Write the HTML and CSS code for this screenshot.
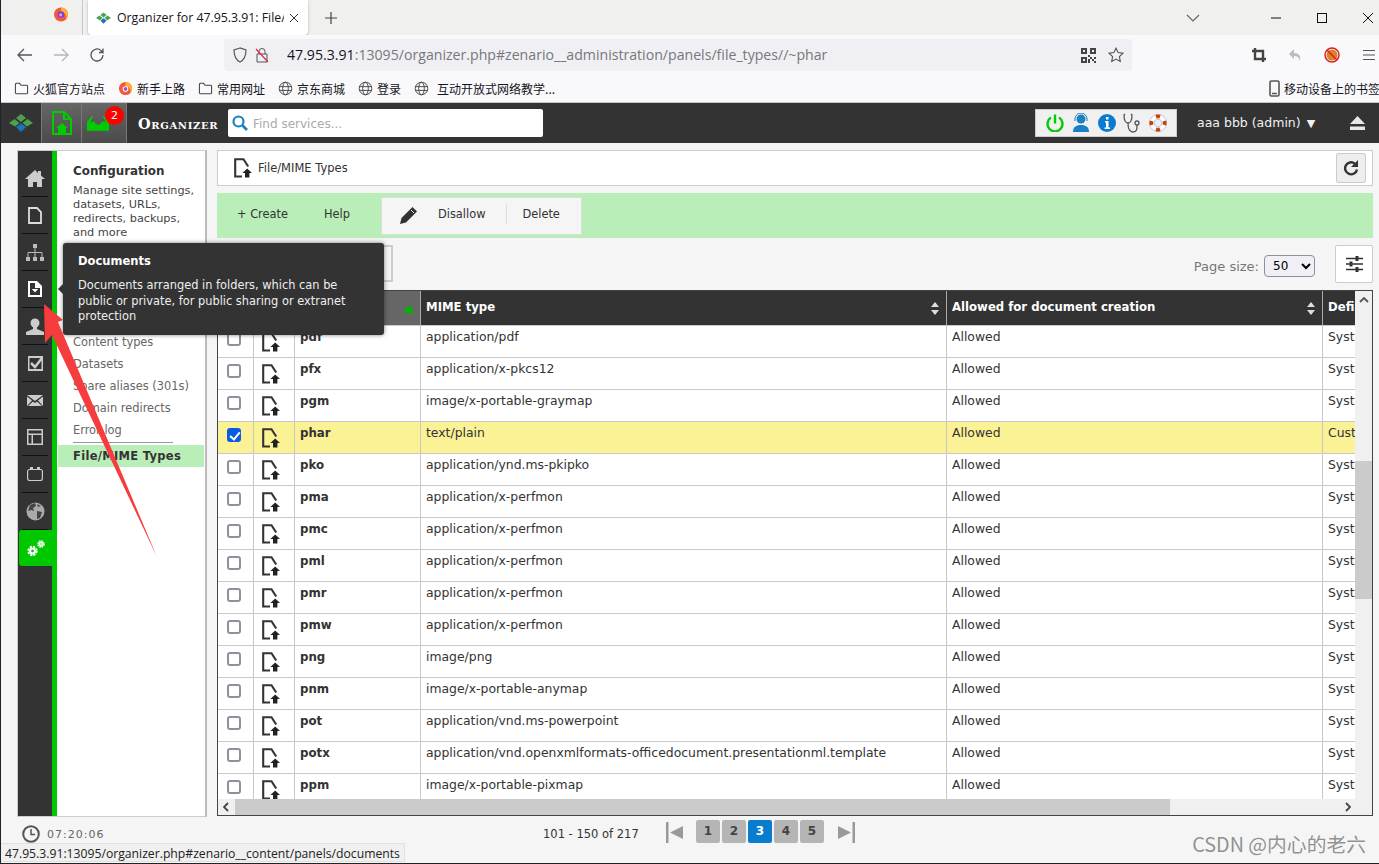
FILE: index.html
```html
<!DOCTYPE html>
<html lang="en">
<head>
<meta charset="utf-8">
<title>Organizer for 47.95.3.91: File/MIME Types</title>
<link rel="stylesheet" href="styles.css">
</head>
<body>
<svg class="defs" aria-hidden="true">
  <symbol id="fileup" viewBox="0 0 18 20"><path d="M8 18.500H1.200V1.200H9.500L14.200 8.500" fill="none" stroke="#333" stroke-width="2.100"/><path d="M13.200 10.500 18 15h-2.600v4.500H11V15H8.400z" fill="#222"/></symbol>
  <symbol id="folder" viewBox="0 0 16 16"><path d="M1.500 3.500a1 1 0 0 1 1-1h3.500l1.500 2h6a1 1 0 0 1 1 1v7a1 1 0 0 1-1 1h-11a1 1 0 0 1-1-1z" fill="none" stroke="#444" stroke-width="1.100"/></symbol>
  <symbol id="globe" viewBox="0 0 16 16"><g fill="none" stroke="#444" stroke-width="1"><circle cx="8" cy="8" r="6.700"/><ellipse cx="8" cy="8" rx="3" ry="6.700"/><path d="M1.500 6h13M1.500 10h13"/></g></symbol>
  <symbol id="zlogo" viewBox="0 0 24 18"><path d="M12 0l5 4-5 4-5-4z" fill="#4da04d"/><path d="M5.500 5 10.500 9 6 12.500 0 9z" fill="#4da04d"/><path d="M18.500 5 24 9 18 12.500 13.500 9z" fill="#4da04d"/><path d="M12 9.500 17 13l-5 5-5-5z" fill="#1a75bb"/></symbol>
</svg>

<header class="tabstrip">
  <div class="tab-pinned">
    <svg class="ff" viewBox="0 0 16 16" width="16" height="16"><circle cx="8" cy="8.500" r="7" fill="#f3593c"/><path d="M8 1.500a7 7 0 0 1 7 7c0 2-1 3.500-2 4.500 1-3-1-7-5-7z" fill="#ffb12b"/><circle cx="8" cy="8.500" r="3.300" fill="#7542e5"/><circle cx="7.700" cy="8.800" r="1.600" fill="#ff9aa2"/></svg>
  </div>
  <div class="tab">
    <svg width="15" height="12"><use href="#zlogo"/></svg>
    <span class="tab-title">Organizer for 47.95.3.91: File/</span>
    <svg class="tab-close" width="10" height="10" viewBox="0 0 10 10"><path d="M1 1l8 8M9 1l-8 8" stroke="#333" fill="none"/></svg>
  </div>
  <svg class="newtab" width="14" height="14" viewBox="0 0 14 14"><path d="M7 1v12M1 7h12" stroke="#444" stroke-width="1.200" fill="none"/></svg>
  <svg class="tabs-all" width="14" height="8" viewBox="0 0 14 8"><path d="M1 1l6 6 6-6" stroke="#666" stroke-width="1.200" fill="none"/></svg>
  <svg class="win" width="12" height="12" viewBox="0 0 12 12"><path d="M1 6h10" stroke="#111" fill="none"/></svg>
  <svg class="win" width="12" height="12" viewBox="0 0 12 12"><rect x="1.500" y="1.500" width="9" height="9" stroke="#111" fill="none"/></svg>
  <svg class="win" width="12" height="12" viewBox="0 0 12 12"><path d="M1 1l10 10M11 1 1 11" stroke="#111" fill="none"/></svg>
</header>

<nav class="navbar">
  <svg class="nav-ic" width="16" height="14" viewBox="0 0 16 14"><path d="M15 7H1.500M7 1 1 7l6 6" stroke="#555" stroke-width="1.300" fill="none"/></svg>
  <svg class="nav-ic" width="16" height="14" viewBox="0 0 16 14"><path d="M1 7h13.500M9 1l6 6-6 6" stroke="#b5b5b8" stroke-width="1.300" fill="none"/></svg>
  <svg class="nav-ic" width="16" height="16" viewBox="0 0 16 16"><path d="M14 8a6 6 0 1 1-2-4.500L14 5.500V1.500M14 5.500h-4" stroke="#555" stroke-width="1.300" fill="none"/></svg>
  <div class="urlbar">
    <svg width="14" height="16" viewBox="0 0 14 16"><path d="M7 1 1 3c0 6 2 10 6 12 4-2 6-6 6-12z" stroke="#555" stroke-width="1.200" fill="none"/></svg>
    <svg class="lock" width="14" height="16" viewBox="0 0 14 16"><path d="M4 7V4.500a3 3 0 0 1 6 0V7M2 7h10v8H2z" stroke="#555" fill="none"/><path d="M1 2l12 13" stroke="#e22850" stroke-width="1.300" fill="none"/></svg>
    <span class="url"><b>47.95.3.91</b>:13095/organizer.php#zenario__administration/panels/file_types//~phar</span>
    <svg class="qr" width="15" height="15" viewBox="0 0 15 15"><path d="M0 0h6v6H0zM9 0h6v6H9zM0 9h6v6H0zM2 2v2h2V2zM11 2v2h2V2zM2 11v2h2v-2zM7 7h2v2H7zM9 9h2v2H9zM11 11h2v2h-2zM13 9h2v2h-2zM7 11h2v4H7zM13 13h2v2h-2z" fill="#444" fill-rule="evenodd"/></svg>
    <svg class="star" width="16" height="16" viewBox="0 0 16 16"><path d="M8 1.200l2.100 4.400 4.800.6-3.500 3.400.9 4.800L8 12.100l-4.300 2.300.9-4.800L1.100 6.200l4.800-.6z" stroke="#555" stroke-width="1.100" fill="none"/></svg>
  </div>
  <div class="nav-tools">
    <svg width="14" height="14" viewBox="0 0 14 14"><path d="M3 0v11h11M0 3h11v11" stroke="#444" stroke-width="2.400" fill="none"/></svg>
    <svg width="14" height="14" viewBox="0 0 14 14"><path d="M6 1 1 6l5 5V8c3 0 5 1 6 5 1-5-1-8-6-8z" fill="#bbb"/></svg>
    <svg width="16" height="16" viewBox="0 0 16 16"><circle cx="8" cy="8" r="5.500" fill="#d9822b"/><circle cx="8" cy="8" r="7" stroke="#d22" stroke-width="1.500" fill="none"/><path d="M3 3l10 10" stroke="#d22" stroke-width="1.500"/></svg>
    <svg width="14" height="12" viewBox="0 0 14 12"><path d="M1 1.500h12M1 6h12M1 10.500h12" stroke="#555" stroke-width="1.200" fill="none"/></svg>
  </div>
</nav>

<div class="bookmarks">
  <span class="bm"><svg width="15" height="15"><use href="#folder"/></svg>火狐官方站点</span>
  <span class="bm"><svg width="15" height="15" viewBox="0 0 16 16"><circle cx="8" cy="8" r="7" fill="#f3593c"/><path d="M8 1a7 7 0 0 1 7 7c0 2-1 3-2 4 1-3-1-6-5-6z" fill="#ffb12b"/><circle cx="8" cy="8.500" r="3" fill="#fff"/><circle cx="8" cy="8.500" r="2" fill="#a14fd0"/></svg>新手上路</span>
  <span class="bm"><svg width="15" height="15"><use href="#folder"/></svg>常用网址</span>
  <span class="bm"><svg width="15" height="15"><use href="#globe"/></svg>京东商城</span>
  <span class="bm"><svg width="15" height="15"><use href="#globe"/></svg>登录</span>
  <span class="bm bm-wide"><svg width="15" height="15"><use href="#globe"/></svg>互动开放式网络教学...</span>
  <span class="bm bm-mobile"><svg width="11" height="17" viewBox="0 0 11 17"><rect x="1" y="1" width="9" height="15" rx="1.500" stroke="#555" stroke-width="1.600" fill="none"/><path d="M3 13.500h5" stroke="#555" stroke-width="1.500"/></svg>移动设备上的书签</span>
</div>

<section class="orgbar">
  <svg class="org-logo" width="24" height="18"><use href="#zlogo"/></svg>
  <a class="org-tab org-tab-home"><svg width="20" height="24" viewBox="0 0 20 24"><path d="M1 1h11l7 7v15H1zM12 1v7h7" stroke="#0c0" stroke-width="2" fill="none"/><path d="M10 12l6 5h-2v5H6v-5H4z" fill="#0c0"/></svg></a>
  <a class="org-tab org-tab-inbox"><svg width="22" height="16" viewBox="0 0 24 17"><path d="M0 17V7l5-6h2L3.500 7H8l2 3h4l2-3h4.500L17 1h2l5 6v10z" fill="#0c0"/></svg><span class="badge">2</span></a>
  <span class="org-name">Organizer</span>
  <label class="org-search">
    <svg width="16" height="16" viewBox="0 0 16 16"><circle cx="6.500" cy="6.500" r="5" stroke="#1b7fc4" stroke-width="2.200" fill="none"/><path d="M10.500 10.500 15 15" stroke="#1b7fc4" stroke-width="2.600"/></svg>
    <input type="text" placeholder="Find services...">
  </label>
  <div class="org-status">
    <svg width="18" height="18" viewBox="0 0 18 18"><path d="M5 3.500a7.500 7.500 0 1 0 8 0" stroke="#0c0" stroke-width="2.400" fill="none"/><path d="M9 0.500v9" stroke="#0c0" stroke-width="2.400"/></svg>
    <svg width="18" height="20" viewBox="0 0 18 20"><circle cx="9" cy="6" r="4.500" fill="#1b7fc4"/><path d="M3 8V6a6 6 0 0 1 12 0v2" stroke="#1b7fc4" fill="none"/><path d="M1 19c0-5 3-7 8-7s8 2 8 7z" fill="#1b7fc4"/></svg>
    <svg width="18" height="18" viewBox="0 0 18 18"><circle cx="9" cy="9" r="9" fill="#0a7cd0"/><path d="M7 7h3.500v6.500H12V15H6.500v-1.500H8V8.500H7zM8 3h2.500v2.500H8z" fill="#fff"/></svg>
    <svg width="18" height="20" viewBox="0 0 18 20"><path d="M2 1 1 2c0 5 1 8 4 8s4-3 4-8L8 1M5 10c0 5 1 9 5 9s4-3 4-7" stroke="#555" stroke-width="1.300" fill="none"/><circle cx="14" cy="10" r="2" stroke="#555" stroke-width="1.300" fill="none"/></svg>
    <svg width="18" height="18" viewBox="0 0 18 18"><circle cx="9" cy="9" r="8.500" fill="#fff" stroke="#bbc" stroke-width=".8"/><circle cx="9" cy="9" r="3.800" fill="#f0f0f0" stroke="#bbc" stroke-width=".8"/><path d="M7 2.600a7 7 0 0 1 4 0M7 15.400a7 7 0 0 0 4 0M2.600 7a7 7 0 0 0 0 4M15.400 7a7 7 0 0 1 0 4" stroke="#c8400f" stroke-width="3.800" fill="none"/></svg>
  </div>
  <span class="org-user">aaa bbb (admin)<i class="caret">▼</i></span>
  <svg class="org-eject" width="15" height="14" viewBox="0 0 15 14"><path d="M7.500 0 15 8H0z" fill="#e8e8e8"/><path d="M0 10.500h15V14H0z" fill="#e8e8e8"/></svg>
</section>

<main class="workspace">
  <aside class="sidebar">
    <ul class="rail">
      <li><svg width="20" height="18" viewBox="0 0 20 18"><path d="M10 1 0 10h3v8h5v-5h4v5h5v-8h3l-4-3.600V2h-3v2z" fill="#ccc"/></svg></li>
      <li><svg width="14" height="17" viewBox="0 0 14 17"><path d="M1 1h8l4 4v11H1z" stroke="#ddd" stroke-width="1.800" fill="none"/></svg></li>
      <li><svg width="18" height="17" viewBox="0 0 18 17"><path d="M7 0h4v4H7zM0 13h4v4H0zM7 13h4v4H7zM14 13h4v4h-4z" fill="#bbb"/><path d="M9 4v9M2 13V8.500h14V13" fill="none" stroke="#bbb"/></svg></li>
      <li><svg width="14" height="16" viewBox="0 0 14 16"><path d="M0 0h9l5 5v11H0z" fill="#fff"/><path d="M2 2v12h10V7H7V2z" fill="#333"/><path d="M3.800 8h6.400L7 11.500z" fill="#fff"/></svg></li>
      <li><svg width="18" height="17" viewBox="0 0 18 17"><circle cx="9" cy="5" r="4.500" fill="#ccc"/><path d="M7 9h4v2l7 3v3H0v-3l7-3z" fill="#ccc"/></svg></li>
      <li><svg width="15" height="15" viewBox="0 0 15 15"><path d="M0 0h15v15H0zM1.500 2v11h12V2z" fill="#ccc" fill-rule="evenodd"/><path d="M3 7l4 4 7-9" stroke="#ccc" stroke-width="2.500" fill="none"/></svg></li>
      <li><svg width="16" height="11" viewBox="0 0 16 11"><path d="M0 0h16L8 6zM0 1.500V11l5-5.500zM16 1.500V11l-5-5.500zM6 6.500 8 8l2-1.500 5 4.500H1z" fill="#ccc"/></svg></li>
      <li><svg width="16" height="16" viewBox="0 0 16 16"><path d="M0 0h16v16H0zM1.500 1.500v3h13v-3zM1.500 6v8.500h3V6zM6 6v8.500h8.500V6z" fill="#ccc" fill-rule="evenodd"/></svg></li>
      <li><svg width="16" height="14" viewBox="0 0 16 14"><rect x="0.600" y="2.500" width="14.800" height="11" rx="2" stroke="#ccc" stroke-width="1.200" fill="none"/><path d="M3 0h3v2.500H3zM10 0h3v2.500h-3z" fill="#ccc"/></svg></li>
      <li><svg width="19" height="19" viewBox="0 0 19 19"><circle cx="9.500" cy="9.500" r="9" fill="#aaa"/><path d="M4 3l5-2 1 3-3 2 1 3-3-1-3 1zM11 9l5 1-2 6-3 1zM11 2l4 2-3 1z" fill="#444"/></svg></li>
      <li class="rail-on"><svg width="18" height="17" viewBox="0 0 18 17"><g fill="none" stroke="#fff"><circle cx="5.500" cy="11" r="2.400" stroke-width="2"/><circle cx="5.500" cy="11" r="4.200" stroke-width="2" stroke-dasharray="2.200 1.100"/><circle cx="14" cy="4" r="1.500" stroke-width="1.500"/><circle cx="14" cy="4" r="3" stroke-width="1.600" stroke-dasharray="1.600 .75"/></g></svg></li>
    </ul>
    <div class="stripe"></div>
    <div class="panel">
      <h2>Configuration</h2>
      <p>Manage site settings, datasets, URLs, redirects, backups, and more</p>
      <ul class="panel-list">
        <li>Content types</li>
        <li>Datasets</li>
        <li>Spare aliases (301s)</li>
        <li>Domain redirects</li>
        <li class="last">Error log</li>
      </ul>
      <div class="panel-current">File/MIME Types</div>
    </div>
  </aside>

  <div class="content">
    <div class="crumbs">
      <svg width="18" height="20"><use href="#fileup"/></svg>
      <span>File/MIME Types</span>
      <button class="refresh"><svg width="16" height="16" viewBox="0 0 16 16"><path d="M14 9.500A6 6 0 1 1 11.800 3.600" stroke="#333" stroke-width="2.400" fill="none"/><path d="M15 0v7H8z" fill="#333"/></svg></button>
    </div>
    <div class="actions">
      <span class="act act-create">+ Create</span>
      <span class="act act-help">Help</span>
      <div class="act-group">
        <svg width="17" height="17" viewBox="0 0 17 17"><path d="M12.500 0 17 4.500 6 15.500 0 17l1.500-6z" fill="#333"/><path d="M11 3l3 3" stroke="#eee"/></svg>
        <span class="act act-dis">Disallow</span>
        <span class="act act-del">Delete</span>
      </div>
    </div>
    <div class="filters">
      <div class="search-stub"></div>
      <span class="ps-label">Page size:</span>
      <select class="ps"><option>50</option></select>
      <button class="cols"><svg width="17" height="16" viewBox="0 0 17 16"><path d="M0 2.500h17M0 8h17M0 13.500h17" stroke="#333" stroke-width="1.500"/><path d="M9.500 0h3v5h-3zM3.500 5.500h3v5h-3zM9.500 11h3v5h-3z" fill="#333"/></svg></button>
    </div>
    <div class="grid">
      <div class="grid-top">
        <div class="grid-clip">
          <table>
            <colgroup><col class="c1"><col class="c2"><col class="c3"><col class="c4"><col class="c5"><col class="c6"></colgroup>
            <thead>
              <tr><th></th><th></th><th class="sorted">Extension<i class="tri"></i></th><th>MIME type<i class="sort"></i></th><th>Allowed for document creation<i class="sort"></i></th><th>Definition</th></tr>
            </thead>
            <tbody>
              <tr><td><input type="checkbox"></td><td><svg width="18" height="20"><use href="#fileup"/></svg></td><td><b>pdf</b></td><td>application/pdf</td><td>Allowed</td><td>System</td></tr>
              <tr><td><input type="checkbox"></td><td><svg width="18" height="20"><use href="#fileup"/></svg></td><td><b>pfx</b></td><td>application/x-pkcs12</td><td>Allowed</td><td>System</td></tr>
              <tr><td><input type="checkbox"></td><td><svg width="18" height="20"><use href="#fileup"/></svg></td><td><b>pgm</b></td><td>image/x-portable-graymap</td><td>Allowed</td><td>System</td></tr>
              <tr class="sel"><td><input type="checkbox" checked></td><td><svg width="18" height="20"><use href="#fileup"/></svg></td><td><b>phar</b></td><td>text/plain</td><td>Allowed</td><td>Custom</td></tr>
              <tr><td><input type="checkbox"></td><td><svg width="18" height="20"><use href="#fileup"/></svg></td><td><b>pko</b></td><td>application/ynd.ms-pkipko</td><td>Allowed</td><td>System</td></tr>
              <tr><td><input type="checkbox"></td><td><svg width="18" height="20"><use href="#fileup"/></svg></td><td><b>pma</b></td><td>application/x-perfmon</td><td>Allowed</td><td>System</td></tr>
              <tr><td><input type="checkbox"></td><td><svg width="18" height="20"><use href="#fileup"/></svg></td><td><b>pmc</b></td><td>application/x-perfmon</td><td>Allowed</td><td>System</td></tr>
              <tr><td><input type="checkbox"></td><td><svg width="18" height="20"><use href="#fileup"/></svg></td><td><b>pml</b></td><td>application/x-perfmon</td><td>Allowed</td><td>System</td></tr>
              <tr><td><input type="checkbox"></td><td><svg width="18" height="20"><use href="#fileup"/></svg></td><td><b>pmr</b></td><td>application/x-perfmon</td><td>Allowed</td><td>System</td></tr>
              <tr><td><input type="checkbox"></td><td><svg width="18" height="20"><use href="#fileup"/></svg></td><td><b>pmw</b></td><td>application/x-perfmon</td><td>Allowed</td><td>System</td></tr>
              <tr><td><input type="checkbox"></td><td><svg width="18" height="20"><use href="#fileup"/></svg></td><td><b>png</b></td><td>image/png</td><td>Allowed</td><td>System</td></tr>
              <tr><td><input type="checkbox"></td><td><svg width="18" height="20"><use href="#fileup"/></svg></td><td><b>pnm</b></td><td>image/x-portable-anymap</td><td>Allowed</td><td>System</td></tr>
              <tr><td><input type="checkbox"></td><td><svg width="18" height="20"><use href="#fileup"/></svg></td><td><b>pot</b></td><td>application/vnd.ms-powerpoint</td><td>Allowed</td><td>System</td></tr>
              <tr><td><input type="checkbox"></td><td><svg width="18" height="20"><use href="#fileup"/></svg></td><td><b>potx</b></td><td>application/vnd.openxmlformats-officedocument.presentationml.template</td><td>Allowed</td><td>System</td></tr>
              <tr><td><input type="checkbox"></td><td><svg width="18" height="20"><use href="#fileup"/></svg></td><td><b>ppm</b></td><td>image/x-portable-pixmap</td><td>Allowed</td><td>System</td></tr>
            </tbody>
          </table>
        </div>
        <div class="vbar">
          <svg width="10" height="6" viewBox="0 0 10 6"><path d="M1 5l4-4 4 4" stroke="#555" stroke-width="1.800" fill="none"/></svg>
          <div class="vthumb"></div>
        </div>
      </div>
      <div class="hbar">
        <svg width="6" height="10" viewBox="0 0 6 10"><path d="M5 1 1 5l4 4" stroke="#444" stroke-width="1.800" fill="none"/></svg>
        <div class="hthumb"></div>
        <svg width="6" height="10" viewBox="0 0 6 10"><path d="M1 1l4 4-4 4" stroke="#444" stroke-width="1.800" fill="none"/></svg>
      </div>
    </div>
  </div>

  <div class="clock">
    <svg width="18" height="18" viewBox="0 0 18 18"><circle cx="9" cy="9" r="7.800" stroke="#555" stroke-width="2" fill="none"/><path d="M9 4v5.500h4" stroke="#555" stroke-width="1.500" fill="none"/></svg>
    <span>07:20:06</span>
  </div>
  <div class="pager">
    <span class="count">101 - 150 of 217</span>
    <svg class="pg-first" width="17" height="21" viewBox="0 0 17 21"><path d="M0 0h2.500v21H0zM17 4v13L4 10.500z" fill="#999"/></svg>
    <span class="pg">1</span><span class="pg">2</span><span class="pg pg-on">3</span><span class="pg">4</span><span class="pg">5</span>
    <svg class="pg-last" width="17" height="21" viewBox="0 0 17 21"><path d="M17 0h-2.500v21H17zM0 4v13l13-6.500z" fill="#999"/></svg>
  </div>
</main>

<div class="tooltip">
  <h3>Documents</h3>
  <p>Documents arranged in folders, which can be public or private, for public sharing or extranet protection</p>
</div>
<svg class="arrow" width="130" height="270" viewBox="0 0 130 270"><path d="M4 0 23 16 18 18 117 253 12 31 5 39z" fill="#f63c3c"/></svg>
<div class="status">47.95.3.91:13095/organizer.php#zenario__content/panels/documents</div>
<div class="mark">CSDN @内心的老六</div>
</body>
</html>
```
FILE: styles.css
```css
* { box-sizing: border-box; }
html, body { margin: 0; padding: 0; }
body {
  position: relative;
  width: 1379px;
  height: 864px;
  overflow: hidden;
  display: flex;
  flex-direction: column;
  background: #f5f5f5;
  font-family: "DejaVu Sans", Verdana, sans-serif;
  font-size: 12px;
  color: #333;
  border-left: 1px solid #1c2430;
  border-bottom: 1px solid #222;
}
.defs { position: absolute; width: 0; height: 0; }
ul { list-style: none; margin: 0; padding: 0; }
svg { display: block; flex: none; }

/* browser chrome */
.tabstrip { height: 35px; flex: none; display: flex; align-items: center; background: #f0f0ef; font-family: "Open Sans", "Noto Sans", sans-serif; }
.tab-pinned { width: 82px; height: 35px; padding: 6px 0 0 52px; border-right: 1px solid #c8c8c8; }
.tab { display: flex; align-items: center; width: 220px; height: 35px; margin-left: 5px; padding-left: 8px; background: #fff; border-radius: 0 0 4px 4px; box-shadow: 0 1px 3px rgba(0,0,0,.25); font-size: 12.300px; color: #15141a; }
.tab svg:first-child { margin-right: 6px; }
.tab-title { width: 167px; white-space: nowrap; overflow: hidden; }
.tab-close { margin-left: 5px; }
.newtab { margin-left: 16px; }
.tabs-all { margin-left: 848px; }
.win { margin-left: 34px; }
.tabs-all + .win { margin-left: 70px; }

.navbar { height: 37px; flex: none; display: flex; align-items: center; background: #f9f9fb; padding: 3px 0 0 16px; }
.nav-ic { margin-right: 20px; }
.nav-ic:nth-child(3) { margin-right: 119px; }
.urlbar { display: flex; align-items: center; width: 908px; height: 32px; padding: 0 8px 0 9px; background: #f0f0f4; border-radius: 4px; font-family: "Open Sans", "Noto Sans", sans-serif; }
.lock { margin-left: 8px; }
.url { margin: 0 0 2px 18px; width: 750px; font-size: 14.130px; color: #77777c; white-space: nowrap; }
.url b { font-weight: 400; color: #15141a; }
.qr { margin-left: 44px; }
.star { margin-left: 12px; }
.nav-tools { display: flex; align-items: center; }
.nav-tools svg { margin-left: 22px; }
.nav-tools svg:first-child { margin-left: 120px; }

.bookmarks { height: 31px; flex: none; display: flex; align-items: center; padding: 2px 0 0 13px; background: #f9f9fb; border-bottom: 1px solid #c6c6c8; font-family: "Noto Sans CJK SC", "Noto Sans", sans-serif; font-size: 12px; color: #15141a; white-space: nowrap; }
.bm { display: flex; align-items: center; gap: 4px; margin-right: 13px; }
.bm-wide { gap: 15px; }
.bm-wide svg { margin-right: -7px; }
.bm-mobile { margin-left: auto; margin-right: -1px; gap: 4px; }

/* organizer bar */
.orgbar { height: 40px; flex: none; display: flex; align-items: center; background: #333; color: #fff; }
.org-logo { margin-left: 8px; }
.org-tab { position: relative; display: flex; align-items: center; justify-content: center; height: 40px; background: linear-gradient(#666, #4b4b4b); border-left: 1px solid #777; }
.org-tab-home { width: 40px; margin-left: 8px; }
.org-tab-inbox { width: 46px; padding-right: 12px; border-right: 1px solid #777; }
.badge { position: absolute; top: 3px; right: 2px; width: 19px; height: 19px; border-radius: 50%; background: #f00; color: #fff; font-size: 11px; line-height: 19px; text-align: center; }
.org-name { margin-left: 11px; width: 90px; font-family: "DejaVu Serif", "Liberation Serif", serif; font-weight: 700; font-variant: small-caps; font-size: 14.500px; letter-spacing: .65px; }
.org-search { display: flex; align-items: center; width: 315px; height: 28px; padding-left: 4px; background: #fff; border-radius: 2px; }
.org-search input { border: 0; padding: 1px 0 0; margin-left: 5px; width: 280px; background: none; outline: 0; font: 12px "DejaVu Sans", sans-serif; }
.org-search input::placeholder { color: #aaa; }
.org-status { display: flex; align-items: center; justify-content: space-between; width: 142px; height: 28px; margin-left: 492px; padding: 0 9px 0 10px; background: #f0f0f0; border: 1px solid #ccc; }
.org-user { width: 140px; margin: 0 0 2px 20px; font-size: 12.500px; color: #f0f0f0; white-space: nowrap; }
.caret { margin-left: 6px; font-style: normal; font-size: 11px; }
.org-eject { margin-left: 13px; }

/* layout */
.workspace { flex: 1; min-height: 0; display: grid; grid-template-columns: 190px 1156px; grid-template-rows: 667px 1fr; column-gap: 10px; padding: 7px 0 0 16px; align-content: start; }

/* sidebar */
.sidebar { display: flex; background: #fff; border: 1px solid #ccc; border-right: 2px solid #bbb; }
.rail { width: 34px; background: #333; flex: none; padding-top: 9px; }
.rail li { height: 37px; display: flex; align-items: center; justify-content: center; border-bottom: 1px solid #111; margin: 0 4px; }
.rail .rail-on { margin: 0 0 0 1px; height: 36px; background: #00c800; border-radius: 3px 0 0 3px; border: 0; }
.stripe { width: 5px; background: #00c800; flex: none; }
.panel { flex: 1; min-width: 0; padding: 12px 0 0 1px; }
.panel h2 { margin: 0 0 5px 15px; font-size: 11.900px; line-height: 16px; color: #333; }
.panel p { width: 128px; margin: 0 0 0 15px; font-size: 11.300px; line-height: 14px; color: #444; }
.panel-list { margin: 91px 0 0 15px; font-size: 11.400px; color: #666; }
.panel-list li { height: 22px; line-height: 22px; white-space: nowrap; }
.panel-list .last { width: 100px; height: 24px; border-bottom: 1px solid #999; }
.panel-current { height: 22px; margin: 2px 1px 0 0; padding-left: 15px; line-height: 22px; background: #b9eeb9; font-weight: 700; font-size: 11.500px; letter-spacing: .3px; }

/* main column */
.content { display: flex; flex-direction: column; height: 667px; }
.crumbs { height: 36px; flex: none; display: flex; align-items: center; padding: 0 6px 0 16px; background: #fff; border: 1px solid #ccc; font-size: 11.500px; }
.crumbs span { margin-left: 6px; flex: 1; }
.refresh { width: 30px; height: 30px; display: flex; align-items: center; justify-content: center; padding: 0; background: #eee; border: 1px solid #ccc; border-radius: 2px; }
.actions { height: 45px; flex: none; margin-top: 7px; display: flex; align-items: center; background: #b9eeb9; font-size: 11.400px; }
.act { margin-bottom: 3px; }
.act-create { margin-left: 20px; }
.act-help { margin-left: 36px; }
.act-group { display: flex; align-items: center; width: 201px; height: 38px; margin-left: 31px; padding-left: 18px; background: #f5f5f5; border: 1px solid #ddd; }
.act-dis { margin-left: 21px; padding-right: 21px; border-right: 1px solid #ddd; line-height: 20px; }
.act-del { margin-left: 15px; }
.filters { height: 52px; flex: none; display: flex; align-items: center; }
.search-stub { width: 176px; height: 37px; border: 2px solid #ccc; margin-top: -1px; }
.ps-label { margin-left: auto; margin-top: 5px; font-size: 13px; color: #777; }
.ps { width: 51px; height: 22px; margin: 3px 20px 0 5px; padding-left: 4px; font: 12px "DejaVu Sans", sans-serif; color: #000; background: #efeff5; border: 1px solid #8f8f9d; border-radius: 4px; }
.cols { width: 38px; height: 38px; display: flex; align-items: center; justify-content: center; padding: 0; background: #fff; border: 1px solid #ccc; border-radius: 2px; margin-top: -1px; }

/* data grid */
.grid { height: 526px; flex: none; display: flex; flex-direction: column; background: #fff; border: 1px solid #444; }
.grid-top { flex: 1; min-height: 0; display: flex; }
.grid-clip { flex: 1; min-width: 0; overflow: hidden; }
table { width: 1305px; table-layout: fixed; border-collapse: separate; border-spacing: 0; font-size: 12.400px; color: #333; }
.c1 { width: 36px; } .c2 { width: 41px; } .c3 { width: 126px; } .c4 { width: 526px; } .c5 { width: 376px; } .c6 { width: 200px; }
th { position: relative; height: 35px; padding: 0 5px 2px; text-align: left; background: #333; color: #fff; font-size: 11.700px; white-space: nowrap; border-right: 1px solid #aaa; border-bottom: 1px solid #ccc; }
th.sorted { background: #666; }
td { height: 32px; padding: 3px 5px 0; vertical-align: top; line-height: 15px; white-space: nowrap; border-right: 1px solid #c8c8c8; border-bottom: 1px solid #c8c8c8; }
td:nth-child(2) { padding: 6px 0 0 8px; }
td:nth-child(1) { padding: 6px 0 0 9px; }
td b { font-size: 11.800px; }
.sel td { background: #fbf195; }
input[type="checkbox"] { appearance: none; display: block; position: relative; width: 14px; height: 14px; margin: 0; background: #fff; border: 2px solid #8f8f9d; border-radius: 3px; }
input[type="checkbox"]:checked { background: #0a5ce0; border-color: #0a5ce0; }
input[type="checkbox"]:checked::after { content: ""; position: absolute; left: 3px; top: 0; width: 4px; height: 8px; border: solid #fff; border-width: 0 2px 2px 0; transform: rotate(40deg); }
.tri { position: absolute; right: 5px; top: 14px; border: 6px solid transparent; border-top: 0; border-bottom: 8px solid #00b400; }
.sort { position: absolute; right: 7px; top: 12px; width: 0; height: 11px; border-left: 4.500px solid transparent; border-right: 4.500px solid transparent; border-top: 0; }
.sort::before, .sort::after { content: ""; position: absolute; left: -4.500px; border: 4.500px solid transparent; }
.sort::before { top: -1px; border-top: 0; border-bottom: 5px solid #ddd; }
.sort::after { bottom: -1px; border-bottom: 0; border-top: 5px solid #ddd; }
.vbar { width: 17px; flex: none; background: #f0f0f0; padding-top: 6px; }
.vbar svg { margin: 0 auto; }
.vthumb { height: 138px; margin-top: 158px; background: #cbcbcb; }
.hbar { height: 16px; flex: none; display: flex; align-items: center; background: #f0f0f0; padding: 0 21px 0 5px; }
.hthumb { width: 935px; height: 16px; margin: 0 auto 0 6px; background: #cbcbcb; }

/* footer */
.clock { display: flex; align-items: center; gap: 7px; height: 34px; padding-left: 5px; }
.clock span { font-size: 11px; letter-spacing: 1px; color: #666; }
.pager { display: flex; align-items: center; height: 34px; padding-left: 326px; font-size: 11.500px; }
.count { width: 123px; }
.pg-first { margin: -4px 13px 0 0; }
.pg { width: 24px; height: 23px; margin: -5px 2px 0 0; background: #b5b5b5; color: #444; border-radius: 2px; text-align: center; line-height: 23px; font-weight: 700; font-size: 12px; }
.pg-on { background: #0a7cd0; color: #fff; }
.pg-last { margin: -4px 0 0 12px; }

/* overlays */
.tooltip { position: absolute; left: 62px; top: 243px; width: 321px; height: 92px; padding: 10px 15px 0; background: #333; color: #eee; border-radius: 3px; box-shadow: 0 0 4px rgba(0,0,0,.5); font-size: 11.400px; }
.tooltip::before { content: ""; position: absolute; left: -5px; top: 41px; border: 5px solid transparent; border-left: 0; border-right-color: #333; }
.tooltip h3 { margin: 0 0 9px; font-size: 11.500px; line-height: 16px; color: #fff; }
.tooltip p { margin: 0; line-height: 15.500px; }
.arrow { position: absolute; left: 39px; top: 304px; }
.status { position: absolute; left: 0; top: 843px; height: 19px; padding: 1px 4px 0; background: #f0f0f0; border: 1px solid #e0e0e0; border-left: 0; font-family: "Open Sans", "Noto Sans", sans-serif; font-size: 12.200px; line-height: 18px; color: #222; white-space: nowrap; }
.mark { position: absolute; right: 13px; top: 832px; font-family: "Noto Sans CJK SC", "Noto Sans", sans-serif; font-size: 19.800px; line-height: 24px; color: rgba(100,100,100,.7); }
```
